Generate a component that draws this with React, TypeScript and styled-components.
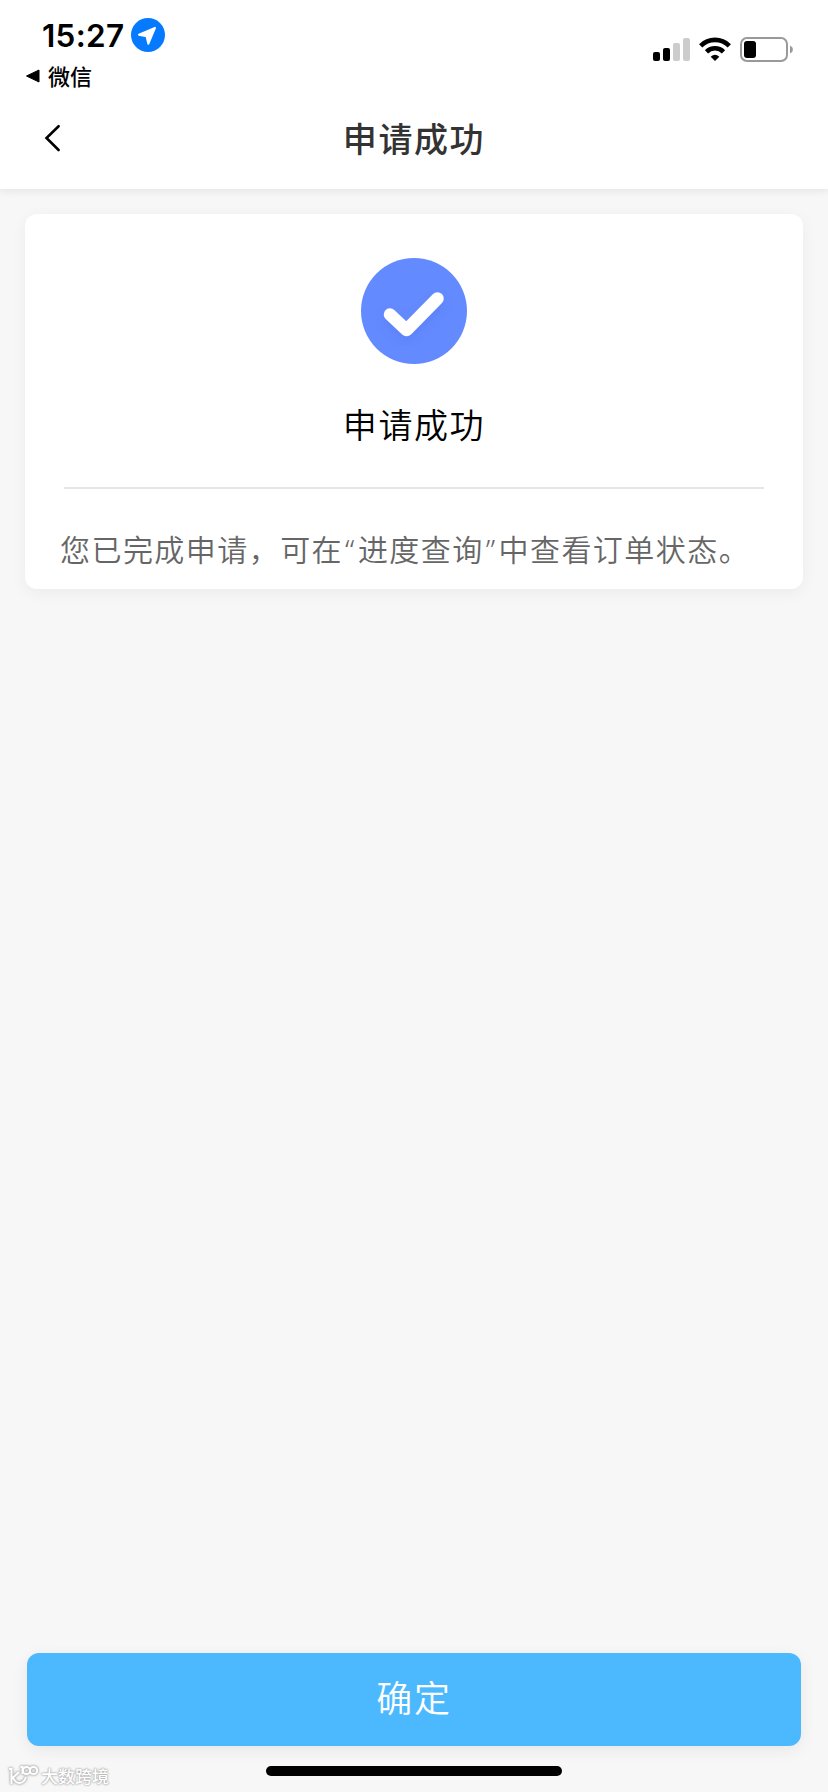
import React from 'react';
import styled, { createGlobalStyle } from 'styled-components';

const GlobalStyle = createGlobalStyle`
  * { box-sizing: border-box; }
  body {
    margin: 0;
    background: #f7f7f7;
    font-family: "Noto Sans CJK SC", sans-serif;
  }
`;

const Screen = styled.div`
  display: flex;
  flex-direction: column;
  width: 828px;
  height: 1792px;
  background: #f7f7f7;
  overflow: hidden;
`;

const Header = styled.header`
  flex: none;
  height: 189px;
  background: #fff;
  box-shadow: 0 2px 8px rgba(0, 0, 0, 0.08);
`;

const StatusBar = styled.div`
  display: flex;
  justify-content: space-between;
  height: 90px;
  padding: 18px 34px 0 25px;
`;

const ClockRow = styled.div`
  display: flex;
  align-items: center;
  height: 34px;
  padding-left: 17px;
  gap: 7px;
`;

const Clock = styled.span`
  width: 82px;
  padding-top: 1px;
  font: 600 31.5px/34px Inter, sans-serif;
  letter-spacing: 0.3px;
  white-space: nowrap;
  color: #000;
`;

const BackToApp = styled.div`
  display: flex;
  align-items: center;
  gap: 8px;
  height: 30px;
  margin-top: 9px;
  font-size: 22px;
  font-weight: 500;
  line-height: 30px;
  color: #000;
`;

const AppName = styled.span`
  height: 30px;
  margin-top: -3px;
`;

const Indicators = styled.div`
  display: flex;
  align-items: flex-start;
  padding-top: 19px;
  gap: 9px;
`;

const NavBar = styled.nav`
  display: grid;
  grid-template-columns: 100px 1fr 100px;
  align-items: center;
  height: 99px;
  padding-bottom: 3px;
`;

const BackButton = styled.button`
  display: flex;
  height: 60px;
  padding: 0 0 0 44px;
  align-items: center;
  border: 0;
  background: none;
`;

const NavTitle = styled.h1`
  margin: 0;
  padding-bottom: 1px;
  text-align: center;
  font-size: 34px;
  font-weight: 500;
  line-height: 50px;
  letter-spacing: 1.6px;
  color: #333;
`;

const Card = styled.section`
  display: flex;
  flex-direction: column;
  align-items: center;
  flex: none;
  height: 375px;
  margin: 25px 25px 0;
  padding-top: 44px;
  border-radius: 12px;
  background: #fff;
  box-shadow: 0 4px 16px rgba(0, 0, 0, 0.05);
`;

const ResultTitle = styled.h2`
  margin: 35px 0 0;
  font-size: 34px;
  font-weight: 350;
  line-height: 50px;
  letter-spacing: 1.6px;
  color: #000;
`;

const Divider = styled.hr`
  width: 700px;
  height: 2px;
  margin: 38px 0 0;
  border: 0;
  background: #e3e7e7;
`;

const Message = styled.p`
  align-self: stretch;
  margin: 37px 0 0;
  padding-left: 35px;
  font-size: 30px;
  font-weight: 350;
  line-height: 44px;
  letter-spacing: 1.45px;
  white-space: nowrap;
  color: #666;
`;

const Quote = styled.span`
  margin: 0 2px;
  font-family: "Noto Sans", sans-serif;
`;

const Footer = styled.footer`
  display: flex;
  flex-direction: column;
  height: 139px;
  margin-top: auto;
  padding: 0 27px;
`;

const ConfirmButton = styled.button`
  flex: none;
  height: 93px;
  padding: 0 0 7px;
  border: 0;
  border-radius: 12px;
  background: #4cb9ff;
  box-shadow: 0 4px 16px rgba(0, 0, 0, 0.07);
  font-family: inherit;
  font-size: 36px;
  font-weight: 350;
  line-height: 50px;
  letter-spacing: 1.8px;
  color: #fff;
`;

const BottomRow = styled.div`
  display: grid;
  grid-template-columns: 239px 296px 239px;
  height: 46px;
`;

const Brand = styled.div`
  display: flex;
  align-items: center;
  gap: 3px;
  height: 26px;
  margin: 17px 0 0 -19px;
  font-size: 17px;
  font-weight: 500;
  line-height: 26px;
  color: #fff;
  text-shadow: 0 0 2px #aaa, 0 0 2px #aaa, 0 0 1px #bbb;
  svg { filter: drop-shadow(0 0 1px #aaa) drop-shadow(0 0 1px #bbb); }
`;

const HomeIndicator = styled.div`
  height: 10px;
  margin-top: 20px;
  border-radius: 5px;
  background: #000;
`;

const LocationIcon = () => (
  <svg width="34" height="34" viewBox="0 0 34 34">
    <circle cx="17" cy="17" r="17" fill="#067aff" />
    <path d="M24 9.8 8 16.700 15.600 18.200 17.300 25.800Z" fill="#fff" stroke="#fff" strokeWidth="2" strokeLinejoin="round" />
  </svg>
);

const SignalIcon = () => (
  <svg width="37" height="26" viewBox="0 0 37 26">
    <rect x="0" y="15" width="7" height="9" rx="2" fill="#000" />
    <rect x="10" y="11" width="7" height="13" rx="2" fill="#000" />
    <rect x="20" y="6" width="7" height="18" rx="2" fill="#ccc" />
    <rect x="30" y="1" width="7" height="23" rx="2" fill="#ccc" />
  </svg>
);

const WifiIcon = () => (
  <svg width="32" height="26" viewBox="0 0 32 26" fill="none" stroke="#000" strokeWidth="4.6">
    <path d="M1.700 8.8A20.200 20.200 0 0 1 30.300 8.8" />
    <path d="M7.500 14.800A12 12 0 0 1 24.500 14.800" />
    <path d="M16 24 11.700 19.700Q16 16 20.300 19.700Z" fill="#000" stroke="none" />
  </svg>
);

const BatteryIcon = () => (
  <svg width="54" height="26" viewBox="0 0 54 26">
    <rect x="1" y="1" width="46" height="23" rx="6" fill="none" stroke="#999" strokeWidth="2" />
    <rect x="4" y="4" width="12" height="17" rx="3" fill="#000" />
    <path d="M50 8.500Q53 10 53 12.500T50 16.500Z" fill="#999" />
  </svg>
);

const BrandMark = () => (
  <svg width="30" height="22" viewBox="0 0 30 22" fill="none" stroke="#fff" strokeWidth="2">
    <path d="M1 4H3.500V19M11 7 5 12.500Q7 18 11.500 18T18 12M12.500 2H14.500V9" />
    <circle cx="18.500" cy="5.500" r="3.600" />
    <circle cx="25.500" cy="5.500" r="3.600" />
  </svg>
);

export default function App() {
  return (
    <>
      <GlobalStyle />
      <Screen>
        <Header>
          <StatusBar>
            <div>
              <ClockRow>
                <Clock>15:27</Clock>
                <LocationIcon />
              </ClockRow>
              <BackToApp>
                <svg width="15" height="14" viewBox="0 0 15 14">
                  <path d="M14 1V13L1.500 7Z" stroke="#000" strokeLinejoin="round" />
                </svg>
                <AppName>微信</AppName>
              </BackToApp>
            </div>
            <Indicators>
              <SignalIcon />
              <WifiIcon />
              <BatteryIcon />
            </Indicators>
          </StatusBar>
          <NavBar>
            <BackButton aria-label="返回">
              <svg width="18" height="28" viewBox="0 0 18 28" fill="none" stroke="#000" strokeWidth="2.6" strokeLinecap="round">
                <path d="M14.600 2.200 2.500 14 14.600 26" />
              </svg>
            </BackButton>
            <NavTitle>申请成功</NavTitle>
          </NavBar>
        </Header>
        <Card>
          <svg width="106" height="106" viewBox="0 0 106 106">
            <defs>
              <filter id="tick-shadow" x="-30%" y="-30%" width="160%" height="180%">
                <feDropShadow dx="0" dy="5" stdDeviation="5" floodColor="#3e62df" floodOpacity="0.22" />
              </filter>
            </defs>
            <circle cx="53" cy="53" r="53" fill="#648aff" />
            <path d="M29 56.500 45.500 72 76.500 40.500" fill="none" stroke="#fff" strokeWidth="12.500" strokeLinecap="round" strokeLinejoin="round" filter="url(#tick-shadow)" />
          </svg>
          <ResultTitle>申请成功</ResultTitle>
          <Divider />
          <Message>
            您已完成申请，可在<Quote>“</Quote>进度查询<Quote>”</Quote>中查看订单状态。
          </Message>
        </Card>
        <Footer>
          <ConfirmButton>确定</ConfirmButton>
          <BottomRow>
            <Brand>
              <BrandMark />
              大数跨境
            </Brand>
            <HomeIndicator />
          </BottomRow>
        </Footer>
      </Screen>
    </>
  );
}
